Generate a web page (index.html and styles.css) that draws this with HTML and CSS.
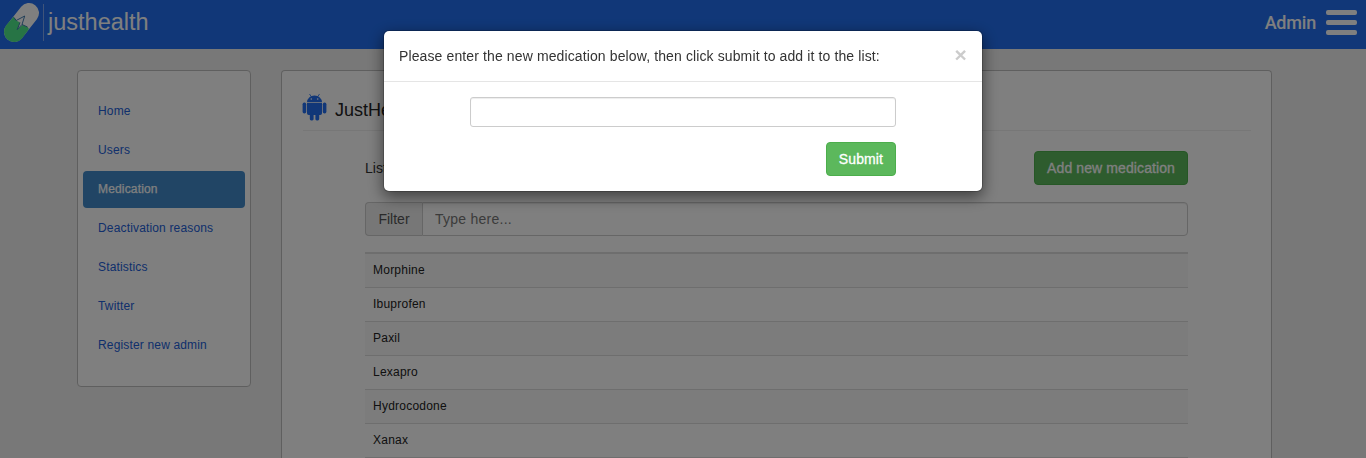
FILE: index.html
```html
<!DOCTYPE html>
<html lang="en">
<head>
<meta charset="utf-8">
<title>justhealth - Medication</title>
<link rel="stylesheet" href="styles.css">
</head>
<body>
<header class="topbar">
  <svg class="pill" width="44" height="46" viewBox="0 0 44 46">
    <path d="M29 13L14 32" stroke="#fff" stroke-width="20" stroke-linecap="round"/>
    <path d="M13.600 16.800L6 25.600A10.250 10.250 0 0 0 22 38.400L29 29L27.500 27L22.500 25L17.300 29.500L20 22.500L16.200 20.500z" fill="#4fe88a"/>
    <path d="M14 17.500L16.200 20.500L24.700 16L22 24.500L27.500 27M22 24.500L17.300 29.500L20 22.500" fill="none" stroke="#2f6fa8" stroke-width=".9"/>
    <path d="M43.500 4v37" stroke="#7ea9f5"/>
  </svg>
  <span class="brand">justhealth</span>
  <span class="user">Admin</span>
  <span class="burger"><i class="bar"></i><i class="bar"></i><i class="bar"></i></span>
</header>
<div class="layout">
  <nav class="panel side">
    <a class="link">Home</a>
    <a class="link">Users</a>
    <a class="link active">Medication</a>
    <a class="link">Deactivation reasons</a>
    <a class="link">Statistics</a>
    <a class="link">Twitter</a>
    <a class="link">Register new admin</a>
  </nav>
  <main class="panel main">
    <h1 class="title">
      <svg class="android" width="25" height="29" viewBox="0 0 25 29" fill="#226ff0">
        <path d="M5 9.200a7.500 6.800 0 0 1 15 0zM5 10h15v10.200a1.700 1.700 0 0 1-1.700 1.700H6.700A1.700 1.700 0 0 1 5 20.200z"/>
        <rect x="0.600" y="9.500" width="3.600" height="11" rx="1.700"/>
        <rect x="20.800" y="9.500" width="3.600" height="11" rx="1.700"/>
        <rect x="7.800" y="20" width="3.800" height="7.500" rx="1.400"/>
        <rect x="13.400" y="20" width="3.800" height="7.500" rx="1.400"/>
        <path d="M7.500 1l2 3M17.500 1l-2 3" stroke="#226ff0" stroke-width=".8"/>
        <circle cx="9.300" cy="6" r=".8" fill="#fff"/>
        <circle cx="15.700" cy="6" r=".8" fill="#fff"/>
      </svg>
      <span>JustHealth</span>
    </h1>
    <div class="content">
      <div class="toolbar"><span>List</span><button class="btn">Add new medication</button></div>
      <div class="filter"><span class="addon">Filter</span><input class="field" placeholder="Type here..."></div>
      <div class="table">
        <div class="row">Morphine</div>
        <div class="row">Ibuprofen</div>
        <div class="row">Paxil</div>
        <div class="row">Lexapro</div>
        <div class="row">Hydrocodone</div>
        <div class="row">Xanax</div>
      </div>
    </div>
  </main>
</div>
<div class="backdrop">
  <div class="modal">
    <div class="modal-head"><span>Please enter the new medication below, then click submit to add it to the list:</span><span class="close">×</span></div>
    <div class="modal-body"><input class="entry"><button class="btn">Submit</button></div>
  </div>
</div>
</body>
</html>
```
FILE: styles.css
```css
* { box-sizing: border-box; }
body {
  margin: 0;
  height: 458px;
  overflow: hidden;
  background: #f1f1f1;
  color: #333;
  font: 14px/20px "Liberation Sans", Arial, sans-serif;
}
.topbar {
  display: flex;
  align-items: flex-start;
  height: 49px;
  background: #226ff0;
  color: #fff;
}
.pill { flex: none; }
.brand { padding-left: 4px; font-size: 23.500px; line-height: 44px; }
.user {
  margin-left: auto;
  font: 500 18px/46px Roboto, sans-serif;
  letter-spacing: -.2px;
}
.burger {
  display: flex;
  flex-direction: column;
  gap: 5px;
  padding: 10px 9px 0 10px;
}
.bar { width: 31px; height: 5px; border-radius: 2px; background: #fff; }
.layout {
  display: flex;
  align-items: flex-start;
  gap: 30px;
  padding: 21px 0 0 77px;
}
.panel { background: #fff; border: 1px solid #bfbfbf; border-radius: 4px; }
.side {
  display: flex;
  flex-direction: column;
  gap: 2px;
  width: 174px;
  height: 317px;
  padding: 22px 5px;
}
.link {
  height: 37px;
  padding: 0 15px;
  border-radius: 4px;
  color: #2260d8;
  font-size: 12px;
  line-height: 36px;
  letter-spacing: .16px;
  white-space: nowrap;
}
.active { background: #428bca; color: #fff; -webkit-text-stroke: .25px #fff; }
.main {
  width: 991px;
  height: 388px;
  padding: 20px 20px 0 21px;
  border-bottom: 0;
  border-radius: 4px 4px 0 0;
}
.title {
  display: flex;
  gap: 8px;
  height: 40px;
  margin: 0;
  border-bottom: 1px solid #eee;
  color: #222;
  font-size: 18px;
  font-weight: 400;
  line-height: 38px;
}
.android { margin: 2px 0 0 -1px; }
.content { width: 823px; margin: 20px 0 0 62px; }
.toolbar { display: flex; justify-content: space-between; align-items: center; }
.btn {
  height: 34px;
  padding: 0 12px;
  border: 1px solid #4cae4c;
  border-radius: 4px;
  background: #5cb85c;
  color: #fff;
  font: 14px/20px "Liberation Sans", Arial, sans-serif;
  letter-spacing: .1px;
  -webkit-text-stroke: .3px #fff;
}
.filter { display: flex; height: 34px; margin-top: 17px; }
.addon {
  width: 57px;
  border: 1px solid #ccc;
  border-right: 0;
  border-radius: 4px 0 0 4px;
  background: #eee;
  color: #555;
  line-height: 32px;
  text-align: center;
}
.field {
  flex: 1;
  padding: 0 12px;
  border: 1px solid #ccc;
  border-radius: 0 4px 4px 0;
  box-shadow: inset 0 1px 1px rgba(0, 0, 0, .075);
  font: 14px "Liberation Sans", Arial, sans-serif;
  letter-spacing: .25px;
}
.field::placeholder { color: #777; }
.table { height: 205px; margin-top: 16px; border-top: 2px solid #ddd; }
.row {
  height: 34px;
  padding: 0 8px;
  border-bottom: 1px solid #ddd;
  color: #222;
  font-size: 12px;
  line-height: 32px;
  letter-spacing: .23px;
}
.row:nth-child(odd) { background: #f9f9f9; }
.backdrop { position: fixed; inset: 0; padding-top: 30px; background: rgba(0, 0, 0, .5); }
.modal {
  width: 600px;
  height: 162px;
  margin: 0 auto;
  border: 1px solid rgba(0, 0, 0, .2);
  border-radius: 6px;
  background: #fff;
  background-clip: padding-box;
  box-shadow: 0 5px 15px rgba(0, 0, 0, .5);
}
.modal-head {
  display: flex;
  justify-content: space-between;
  height: 51px;
  padding: 15px;
  border-bottom: 1px solid #e5e5e5;
  letter-spacing: .117px;
}
.close { color: #ccc; font-size: 21px; font-weight: 700; line-height: 18px; }
.modal-body {
  display: flex;
  flex-direction: column;
  align-items: flex-end;
  gap: 15px;
  padding: 15px 86px;
}
.entry {
  width: 426px;
  height: 30px;
  border: 1px solid #ccc;
  border-radius: 3px;
  box-shadow: inset 0 1px 1px rgba(0, 0, 0, .075);
}
```
